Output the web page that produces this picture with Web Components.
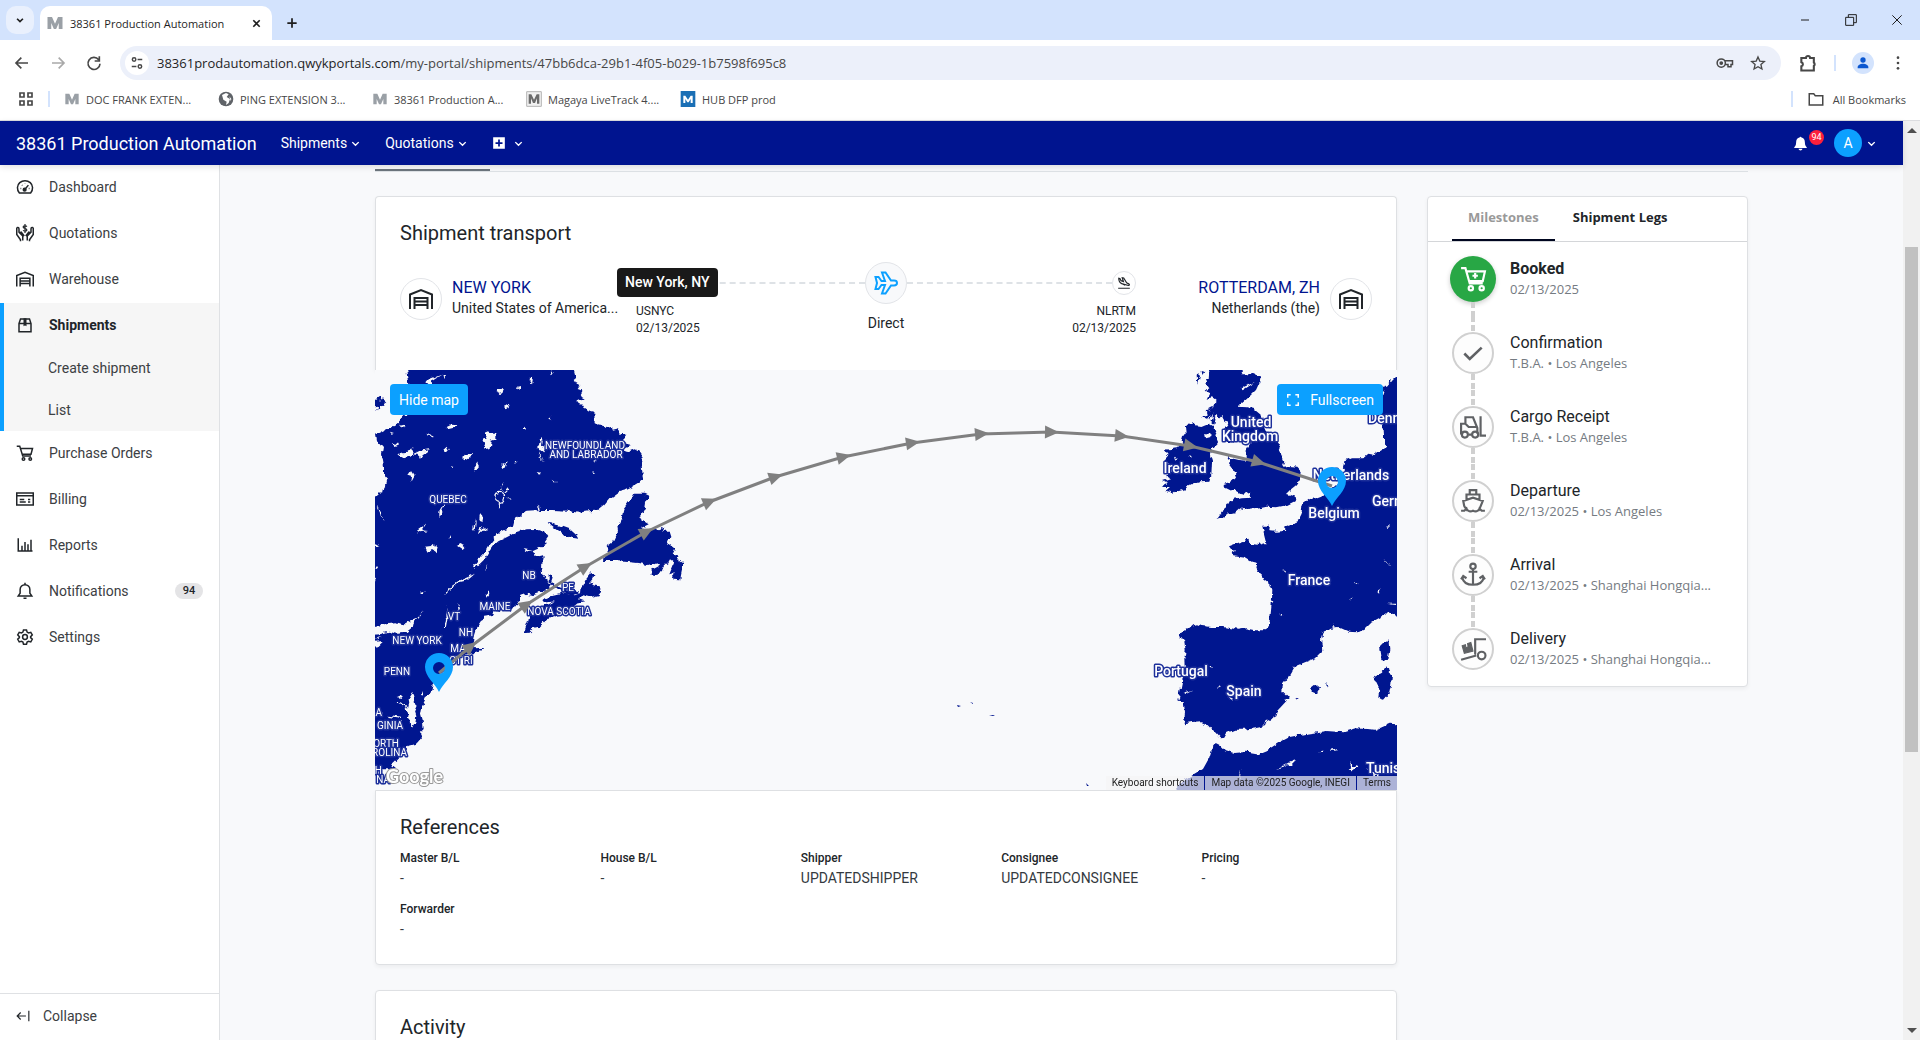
<!DOCTYPE html>
<html lang="en">
<head>
<meta charset="utf-8">
<title>38361 Production Automation</title>
<style>
  html, body { margin: 0; height: 100%; }
  body { font-family: Roboto, "Liberation Sans", sans-serif; font-size: 14px; color: #212529; overflow: hidden; }
</style>
</head>
<body>
<browser-window>
  <tab-strip slot="chrome" label="38361 Production Automation"></tab-strip>
  <address-bar slot="chrome"></address-bar>
  <bookmark-bar slot="chrome">
    <bookmark-link icon="mg">DOC FRANK EXTEN...</bookmark-link>
    <bookmark-link icon="globe">PING EXTENSION 3...</bookmark-link>
    <bookmark-link icon="mg">38361 Production A...</bookmark-link>
    <bookmark-link icon="mbox">Magaya LiveTrack 4....</bookmark-link>
    <bookmark-link icon="mblue">HUB DFP prod</bookmark-link>
  </bookmark-bar>
  <portal-app>
    <portal-header slot="header"></portal-header>
    <side-nav slot="nav">
      <nav-item icon="dash">Dashboard</nav-item>
      <nav-item icon="quote">Quotations</nav-item>
      <nav-item icon="warehouse">Warehouse</nav-item>
      <nav-group>
        <nav-item icon="box" active>Shipments</nav-item>
        <nav-item sub>Create shipment</nav-item>
        <nav-item sub>List</nav-item>
      </nav-group>
      <nav-item icon="cart">Purchase Orders</nav-item>
      <nav-item icon="bill">Billing</nav-item>
      <nav-item icon="chart">Reports</nav-item>
      <nav-item icon="bell" count="94">Notifications</nav-item>
      <nav-item icon="gear">Settings</nav-item>
      <nav-item slot="footer" foot icon="collapse">Collapse</nav-item>
    </side-nav>
    <shipment-view>
      <info-card slot="main" part-top heading="Shipment transport">
        <route-summary></route-summary>
      </info-card>
      <route-map slot="main"></route-map>
      <info-card slot="main" part-bottom heading="References">
        <field-grid>
          <ref-field label="Master B/L">-</ref-field>
          <ref-field label="House B/L">-</ref-field>
          <ref-field label="Shipper">UPDATEDSHIPPER</ref-field>
          <ref-field label="Consignee">UPDATEDCONSIGNEE</ref-field>
          <ref-field label="Pricing">-</ref-field>
          <ref-field label="Forwarder">-</ref-field>
        </field-grid>
      </info-card>
      <info-card slot="main" spaced heading="Activity"></info-card>
      <milestone-card slot="aside">
        <milestone-item done icon="cartplus" label="Booked">02/13/2025</milestone-item>
        <milestone-item icon="check" label="Confirmation">T.B.A. • Los Angeles</milestone-item>
        <milestone-item icon="forklift" label="Cargo Receipt">T.B.A. • Los Angeles</milestone-item>
        <milestone-item icon="ship" label="Departure">02/13/2025 • Los Angeles</milestone-item>
        <milestone-item icon="anchor" label="Arrival">02/13/2025 • Shanghai Hongqia...</milestone-item>
        <milestone-item last icon="dolly" label="Delivery">02/13/2025 • Shanghai Hongqia...</milestone-item>
      </milestone-card>
    </shipment-view>
  </portal-app>
</browser-window>

<script>
const BASE = `*{box-sizing:border-box} button,input{font:inherit;color:inherit;border:0;background:none;padding:0;margin:0} a{color:inherit;text-decoration:none}`;
function define(name, css, html) {
  customElements.define(name, class extends HTMLElement {
    connectedCallback() {
      if (this.shadowRoot) return;
      const root = this.attachShadow({ mode: 'open' });
      const t = document.createElement('template');
      t.innerHTML = `<style>${BASE}${css}</style>` + (typeof html === 'function' ? html(this) : html);
      root.append(t.content.cloneNode(true));
    }
  });
}

const M = (fill) => `<path fill="${fill}" stroke="none" d="M2 20V4h6l4 9 4-9h6v16h-5V12l-3.500 8h-3L7 12v8z"/>`;
const ICONS = {
  down: '<path d="M5 9l7 7 7-7"/>',
  plus: '<path d="M12 4v16M4 12h16"/>',
  close: '<path d="M5 5l14 14M19 5L5 19"/>',
  min: '<path d="M4 12h16"/>',
  restore: '<path d="M4 8h12v12H4zM8 8V4h12v12h-4"/>',
  back: '<path d="M21 12H4M11 4l-8 8 8 8"/>',
  fwd: '<path d="M3 12h17M13 4l8 8-8 8"/>',
  reload: '<path d="M19 7a9 9 0 1 0 2 6M20 2v7h-7"/>',
  tune: '<circle cx="7" cy="6" r="3"/><path d="M13 6h8M3 18h8"/><circle cx="17" cy="18" r="3"/>',
  key: '<circle cx="7" cy="12" r="5.500"/><circle cx="7" cy="12" r="1.500" fill="currentColor"/><path d="M12 9h10v5h-2v3h-4v-3h-4"/>',
  star: '<path d="M12 3l2.700 6.200 6.800.6-5.100 4.500 1.500 6.700-5.900-3.500L6.100 21l1.500-6.700L2.500 9.800l6.800-.6z"/>',
  puzzle: '<path d="M4 6h5.500a2.500 2.500 0 0 1 5 0H19v5.500a2.500 2.500 0 0 1 0 4V21H4v-5a2.600 2.600 0 0 0 0-5z"/>',
  person: '<circle cx="12" cy="7.500" r="4" fill="currentColor" stroke="none"/><path fill="currentColor" stroke="none" d="M4 20v-2c0-3 4-5 8-5s8 2 8 5v2z"/>',
  dots: '<g fill="currentColor" stroke="none"><circle cx="12" cy="4" r="2"/><circle cx="12" cy="12" r="2"/><circle cx="12" cy="20" r="2"/></g>',
  apps: '<path d="M3 3h6v6H3zM15 3h6v6h-6zM3 15h6v6H3zM15 15h6v6h-6z"/>',
  folder: '<path d="M3 5h6l2 2.500h10V20H3z"/>',
  mg: M('#9aa0a6'),
  mbox: '<path fill="#f1f1f1" stroke="#b5b5b5" stroke-width="1.500" d="M1 1h22v22H1z"/>' + '<path fill="#6b6b6b" stroke="none" d="M4 19V5h4l4 8 4-8h4v14h-3.500v-8L13.500 18h-3L7.500 11v8z"/>',
  mblue: '<path fill="#1a6fb5" stroke="none" d="M1 0h22v24H1z"/><path fill="#fff" stroke="none" d="M5 18V7h3l4 6 4-6h3v11h-3v-6l-3 5h-2l-3-5v6z"/>',
  globe: '<circle cx="12" cy="12" r="11" fill="#5f6368" stroke="none"/><path fill="#fff" stroke="none" d="M6 6l6-3 4 2-3 4 5 3-2 6-4 3 1-5-5-3zM17 8l3 4-1 3z"/>',
  dash: '<path d="M4.500 20C.8 15.600 1.200 9.600 5 6.200c4-3.600 10-3.600 14 0 3.800 3.400 4.200 9.400.5 13.800z"/><path d="M12 15l4.500-5.500"/><circle cx="11.500" cy="15.500" r="1.800" fill="currentColor"/><path d="M6 14h1M8 9.500l.5.500M12 7.500v.5M17 14h1"/>',
  quote: '<path d="M1 5v9l5 7v2M1 5c2-1 3 0 3 2v4l5 5v6M4 12l3-1 4 5M23 5v9l-5 7v2M23 5c-2-1-3 0-3 2v4l-5 5v6M20 12l-3-1-4 5"/><path d="M14.500 3.500c-1-1.600-5-1.200-5 .6 0 2.400 5 1.400 5 3.800 0 1.800-4 2-5 .4M12 0v12" stroke-width="1.600"/>',
  warehouse: '<path d="M1 22V7.500L12 3l11 4.500V22M5.500 22V11h13v11M5.500 14.500h13M5.500 18h13"/>',
  box: '<path d="M4 10l2-6h12l2 6v11H4zM4 10h16"/><path fill="currentColor" d="M11 4h2v8l-1-.5-1 .5z"/>',
  cart: '<path d="M1 3h4l4 13h11M5.500 6H22l-2 7.500H8"/><circle cx="10" cy="20" r="1.700"/><circle cx="19" cy="20" r="1.700"/>',
  bill: '<path d="M1 4h22v16H1z"/><path d="M1 7.500h22M5 12.500h6M5 16h8M16 12.500h3M16 16h3"/>',
  chart: '<path d="M3 3v17h19M8 19v-6M12 19V8M16 19v-8M20 19V5"/>',
  bell: '<path d="M3 18.500l2.500-3.500V10a6.500 6.500 0 0 1 13 0v5l2.500 3.500zM10 21.500h4M12 1v2"/>',
  gear: '<circle cx="12" cy="12" r="3.200"/><path d="M10 2.500h4l.8 3 1.900 1.100 3-.8 2 3.400-2.200 2.300v1.300l2.200 2.200-2 3.500-3-.9-1.900 1.100-.8 2.900h-4l-.8-2.900-1.900-1.100-3 .9-2-3.500 2.200-2.200v-1.300L2.300 9.200l2-3.400 3 .8 1.900-1.100z"/>',
  collapse: '<path d="M22 3v18M17 12H2M8 6l-6 6 6 6"/>',
  belldark: '<path fill="currentColor" stroke="none" d="M12 1c1 0 1.500.6 1.500 1.500C17 3.300 19 6 19 10c0 5 1.500 6.500 3 8v1H2v-1c1.500-1.500 3-3 3-8 0-4 2-6.700 5.500-7.500C10.500 1.600 11 1 12 1zM9 20.500h6c0 1.500-1.500 2.500-3 2.500s-3-1-3-2.500z"/>',
  plusbox: '<path fill="currentColor" stroke="none" fill-rule="evenodd" d="M2 2h20v20H2zM10.500 6v4.500H6v3h4.500V18h3v-4.500H18v-3h-4.500V6z"/>',
  plane: '<path d="M1.500 6h3l3 4h3.500L8 1.500h3.500L17 9.600h3c2 0 3 1.400 3 2.400s-1 2.400-3 2.400h-3L11.500 22.500H8L11 14H7.500l-3 4h-3L3 12z"/>',
  landing: '<path d="M2 21h20M3 4l2 .5 2 3.500 4 1.500L9 3l2.500.5 5 8 3.500 2c2 1.200 1.500 3-.5 2.800L8 13c-3-1-5-3.500-5-9zM8 13l6 3"/>',
  full: '<path d="M3 8V3h5M16 3h5v5M21 16v5h-5M8 21H3v-5"/>',
  cartplus: '<path d="M1 2h4l4 14h12M5.500 5H23l-2 9H8.500M14 6.500v5M11.500 9h5"/><circle cx="10" cy="20.500" r="2"/><circle cx="20" cy="20.500" r="2"/>',
  check: '<path d="M4 12.500l5 5L20 7" stroke-width="2.400"/>',
  forklift: '<path d="M3 18H1V9h4V3h7l4 10v5M5 9l3 3h8M8 19h3M19 2v18h5"/><circle cx="4.500" cy="19" r="2.800"/><circle cx="14" cy="19" r="2.800"/>',
  ship: '<path d="M9 6V2h6v3M6 11V6h12v5M4 17l-1-5 9-3 9 3-2 5-2 4M4 17l3 4M1 21h3l2-2c1 3 4 3 6 2 2 1 5 1 6-2l2 2h3"/>',
  anchor: '<circle cx="12" cy="4" r="2.500"/><path d="M12 7v14M8 9h8M2 14c1 5 5 7 10 7s9-2 10-7M1 16l2-3 3 2M23 16l-2-3-3 2"/>',
  dolly: '<path d="M1 22l14-4M24 3H14v14"/><circle cx="20" cy="18" r="3.500"/><path fill="currentColor" d="M2 9l3-1 .5 3 2-1L7 7l3-1 2 8-8 2z" stroke-width="1"/>'
};
define('ui-icon', ':host{display:inline-flex;flex:none;width:var(--s,18px);height:var(--s,18px)} svg{width:100%;height:100%;overflow:visible}',
  (e) => `<svg viewBox="0 0 24 24" fill="none" stroke="currentColor" stroke-width="${e.getAttribute('w') || 2}" aria-hidden="true">${ICONS[e.getAttribute('name')]}</svg>`);

define('browser-window', ':host{display:flex;flex-direction:column;height:100vh;background:#fff} ::slotted(portal-app){flex:1;min-height:0}', '<slot name="chrome"></slot><slot></slot>');

define('tab-strip', `
  :host{display:flex;height:40px;background:#d3e3fd;padding-left:6px;font-family:"Open Sans","Noto Sans",sans-serif;font-size:11px;color:#1f1f1f}
  .list{width:28px;height:28px;margin:6px 6px 0 0;border-radius:10px;background:#e9f0fd;display:flex;align-items:center;justify-content:center}
  .tab{display:flex;align-items:center;width:232px;height:34px;margin-top:6px;background:#fff;border-radius:10px 10px 0 0;padding:0 6px;gap:6px}
  .tab span{flex:1;white-space:nowrap} .x{display:flex;padding:4px}
  .add{margin:6px 0 0 8px;width:24px;display:flex;align-items:center;justify-content:center}
  .win{margin-left:auto;display:flex} .win button{width:46px;display:flex;align-items:center;justify-content:center}
  ui-icon{--s:12px}`,
  (e) => `<button class="list" aria-label="Search tabs"><ui-icon name="down" w="4" style="--s:10px"></ui-icon></button>
  <div class="tab"><ui-icon name="mg" style="--s:18px"></ui-icon><span>${e.getAttribute('label')}</span><button class="x" aria-label="Close tab"><ui-icon name="close" w="3.500" style="--s:11px"></ui-icon></button></div>
  <button class="add" aria-label="New tab"><ui-icon name="plus" w="3" style="--s:14px"></ui-icon></button>
  <div class="win"><button aria-label="Minimize"><ui-icon name="min"></ui-icon></button><button aria-label="Restore"><ui-icon name="restore" style="--s:16px" w="1.500"></ui-icon></button><button aria-label="Close"><ui-icon name="close" style="--s:16px" w="1.500"></ui-icon></button></div>`);

define('address-bar', `
  :host{display:flex;align-items:center;height:46px;padding:0 14px;color:#474747;font-family:"Open Sans","Noto Sans",sans-serif;font-size:13px;background:#fff}
  .nav{display:flex;gap:20px;margin-right:18px} button{display:flex}
  .omni{flex:1;display:flex;align-items:center;height:34px;border-radius:17px;background:#ecf0fa;padding:0 15px 0 5px;gap:16px}
  .tune{width:24px;height:24px;border-radius:12px;background:#fff;align-items:center;justify-content:center;margin-right:-8px}
  .url{flex:1;white-space:nowrap} b{font-weight:400;color:#1f1f1f}
  .right{display:flex;align-items:center;gap:16px;margin-left:17px} i{width:2px;height:16px;background:#d3e3fd}
  .me{width:22px;height:22px;border-radius:11px;background:#d3e3fd;color:#0b57d0;align-items:center;justify-content:center}
  ui-icon{--s:16px}`,
  `<div class="nav"><button aria-label="Back"><ui-icon name="back" w="2.500"></ui-icon></button><button aria-label="Forward" style="color:#a9a9a9"><ui-icon name="fwd" w="2.500"></ui-icon></button><button aria-label="Reload"><ui-icon name="reload" w="2.500"></ui-icon></button></div>
  <div class="omni"><button class="tune" aria-label="Site information"><ui-icon name="tune" w="2.500" style="--s:14px"></ui-icon></button>
  <span class="url"><b>38361prodautomation.qwykportals.com</b>/my-portal/shipments/47bb6dca-29b1-4f05-b029-1b7598f695c8</span>
  <button aria-label="Passwords"><ui-icon name="key" style="--s:18px"></ui-icon></button><button aria-label="Bookmark"><ui-icon name="star"></ui-icon></button></div>
  <div class="right"><button aria-label="Extensions"><ui-icon name="puzzle" style="--s:20px" w="2.500"></ui-icon></button><i></i><button class="me" aria-label="Profile"><ui-icon name="person"></ui-icon></button><button aria-label="Menu"><ui-icon name="dots"></ui-icon></button></div>`);

define('bookmark-bar', `
  :host{display:flex;align-items:center;height:35px;padding:0 14px 8px 18px;border-bottom:1px solid #dcdde0;gap:20px;background:#fff;color:#474747;font-family:"Open Sans","Noto Sans",sans-serif;font-size:11px;box-sizing:border-box}
  i{width:2px;height:16px;background:#d3e3fd;margin:0 -6px 0 -6px} .all{margin-left:auto;display:flex;align-items:center;gap:20px} .all a{display:flex;align-items:center;gap:8px}`,
  `<button aria-label="Apps"><ui-icon name="apps" w="2.500" style="--s:16px;display:flex"></ui-icon></button><i></i><slot></slot><div class="all"><i></i><a href="#"><ui-icon name="folder"></ui-icon>All Bookmarks</a></div>`);
define('bookmark-link', ':host{display:block;width:134px} a{display:flex;align-items:center;gap:6px;white-space:nowrap} ui-icon{--s:16px}',
  (e) => `<a href="#"><ui-icon name="${e.getAttribute('icon')}"></ui-icon><slot></slot></a>`);

define('portal-app', `
  :host{display:grid;grid-template:44px minmax(0,1fr)/220px minmax(0,1fr) 17px;background:#f8f9fb}
  .head{grid-column:1/3;z-index:2;box-shadow:0 2px 6px rgba(0,0,0,.12)} .nav,.main{min-height:0;overflow:hidden}
  .bar{grid-area:1/3/3/4;background:#f1f1f1;display:flex;flex-direction:column;align-items:center}
  .bar span{width:0;border:5px solid transparent;border-top:0;border-bottom-color:#505050;margin:7px 0}
  .bar span:last-child{transform:rotate(180deg);margin-top:auto} .bar b{width:13px;margin-top:107px;height:55%;background:#c1c1c1}`,
  `<div class="head"><slot name="header"></slot></div><div class="bar"><span></span><b></b><span></span></div><div class="nav"><slot name="nav"></slot></div><div class="main"><slot></slot></div>`);

define('portal-header', `
  :host{display:flex;align-items:center;height:44px;background:#00148f;color:#fff;padding:0 26px 0 16px}
  h1{font-size:18px;font-weight:400;margin:0 24px 0 0} nav{display:flex;gap:24px} nav button{display:flex;align-items:center;gap:3px}
  ui-icon{--s:11px} .r{margin-left:auto;display:flex;align-items:center} .bell{display:flex}
  .n{width:15px;height:15px;border-radius:8px;background:#fc1f3c;font-size:9px;line-height:15px;text-align:center;margin:-12px 10px 0 1px}
  .av{width:28px;height:28px;border-radius:14px;background:#0ca0ff;line-height:28px;text-align:center;font-size:14px;margin-right:4px}`,
  `<h1>38361 Production Automation</h1>
  <nav><button>Shipments<ui-icon name="down" w="3"></ui-icon></button><button>Quotations<ui-icon name="down" w="3"></ui-icon></button><button aria-label="Create"><ui-icon name="plusbox" style="--s:14px"></ui-icon><ui-icon name="down" w="3" style="margin-left:4px"></ui-icon></button></nav>
  <div class="r"><button class="bell" aria-label="Notifications"><ui-icon name="belldark" style="--s:15px"></ui-icon></button><span class="n">94</span><button class="av">A</button><ui-icon name="down" w="3"></ui-icon></div>`);

define('side-nav', `:host{display:flex;flex-direction:column;height:100%;background:#fff;border-right:1px solid #dfe1e4;box-sizing:border-box} nav{flex:1} .foot{border-top:1px solid #dfe1e4}`,
  `<nav><slot></slot></nav><div class="foot"><slot name="footer"></slot></div>`);
define('nav-group', ':host{display:block;background:#f6f6f6;box-shadow:inset 4px 0 #0ca0ff}', '<slot></slot>');
define('nav-item', `
  :host{display:block;margin-bottom:2px} :host([active]),:host([sub]){margin:0}
  a{display:flex;align-items:center;gap:15px;height:44px;padding:0 16px;color:#3c4043} :host([sub]) a{height:42px;padding-left:48px} :host([active]) a{font-weight:700;color:#212529}
  ui-icon{color:#212529} :host([foot]) ui-icon{--s:14px} :host([foot]) a{gap:13px}
  em{margin-left:auto;font-style:normal;font-weight:500;font-size:11px;line-height:16px;background:#e4e4e6;border-radius:8px;width:28px;text-align:center;color:#212529}`,
  (e) => `<a href="#">${e.hasAttribute('icon') ? `<ui-icon name="${e.getAttribute('icon')}"></ui-icon>` : ''}<span><slot></slot></span>${e.hasAttribute('count') ? `<em>${e.getAttribute('count')}</em>` : ''}</a>`);

define('shipment-view', `
  :host{display:block;padding:4px 155px 0}
  .tabs{border-bottom:1px solid #dee2e6;margin-bottom:24px} .tabs i{display:block;width:115px;height:2px;background:#6c757d}
  .cols{display:grid;grid-template-columns:minmax(0,1022fr) minmax(0,321fr);gap:30px;align-items:start} .cols>div{display:flex;flex-direction:column}`,
  `<div class="tabs"><i></i></div><div class="cols"><div><slot name="main"></slot></div><div><slot name="aside"></slot></div></div>`);

define('info-card', `
  :host{display:block;background:#fff;border:1px solid #dee0e3;border-radius:4px;padding:24px 24px 25px;box-shadow:0 2px 4px rgba(0,0,0,.05)}
  :host([part-top]){border-bottom:0;border-radius:4px 4px 0 0;padding-bottom:33px} :host([part-bottom]){border-radius:0 0 4px 4px} :host([spaced]){margin-top:25px;min-height:120px}
  h2{font-size:20px;line-height:24px;font-weight:400;margin:0 0 11px}`,
  (e) => `<h2>${e.getAttribute('heading')}</h2><slot></slot>`);
define('field-grid', ':host{display:grid;grid-template-columns:repeat(5,minmax(0,1fr));gap:13px 30px}', '<slot></slot>');
define('ref-field', ':host{display:block} b{display:block;font-size:12px;line-height:16px;font-weight:500;margin-bottom:2px} div{line-height:20px;color:#343a40}',
  (e) => `<b>${e.getAttribute('label')}</b><div><slot></slot></div>`);

define('route-summary', `
  :host{display:grid;grid-template-columns:236px minmax(0,1fr) 236px;padding-top:6px}
  .place{display:flex;gap:10px;padding:16px 0 0 0;line-height:20px} .place p{margin:0;white-space:nowrap}
  .place a{font-size:16px;color:#00148f;white-space:nowrap} .to{justify-content:flex-end;text-align:right}
  .c{display:flex;align-items:center;justify-content:center;flex:none;width:42px;height:42px;border:1px solid #e2e4e8;border-radius:50%;background:#fff}
  .big{background:#f8f9fb;color:#0ca0ff} .small{width:24px;height:24px}
  .legs{display:grid;grid-template-columns:1fr auto 1fr} .line{display:flex;align-items:center;height:42px;position:relative} .line i{flex:1;border-top:2px dashed #dee2e6}
  .t{font-size:12px;line-height:17px;margin-top:-1px} .mid{text-align:center;line-height:20px} .mid .c{margin-bottom:9px}
  .tip{position:absolute;left:-19px;top:6px;background:#191919;color:#fff;border-radius:4px;padding:0 8px;line-height:29px;font-weight:500;white-space:nowrap}`,
  `<div class="place"><span class="c"><ui-icon name="warehouse" style="--s:24px"></ui-icon></span><div><a href="#">NEW YORK</a><p>United States of America...</p></div></div>
  <div class="legs"><div><div class="line"><span class="c small"></span><i></i><span class="tip" role="tooltip">New York, NY</span></div><div class="t">USNYC<br>02/13/2025</div></div>
  <div class="mid"><span class="c big"><ui-icon name="plane" style="--s:24px"></ui-icon></span>Direct</div>
  <div><div class="line"><i></i><span class="c small"><ui-icon name="landing" style="--s:14px"></ui-icon></span></div><div class="t" style="text-align:right">NLRTM<br>02/13/2025</div></div></div>
  <div class="place to"><div><a href="#">ROTTERDAM, ZH</a><p>Netherlands (the)</p></div><span class="c"><ui-icon name="warehouse" style="--s:24px"></ui-icon></span></div>`);

define('milestone-card', `
  :host{display:block;background:#fff;border:1px solid #dee0e3;border-radius:4px;box-shadow:0 2px 4px rgba(0,0,0,.05)}
  .tabs{display:flex;gap:2px;height:45px;padding-left:24px;border-bottom:1px solid #d4d6d9;font-family:"Open Sans","Noto Sans",sans-serif;font-weight:700;font-size:13px;color:#212529}
  button{padding:0 16px 2px;border-bottom:2px solid transparent} .on{color:#999;border-color:#00061f}`,
  `<div class="tabs" role="tablist"><button class="on" role="tab">Milestones</button><button role="tab">Shipment Legs</button></div><slot></slot>`);
define('milestone-item', `
  :host{display:flex;height:74px;padding:0 16px 0 22px;gap:14px}
  .col{width:46px;display:flex;flex-direction:column;align-items:center;flex:none}
  .col i{flex:1;width:4px;background:repeating-linear-gradient(#d0d0d0 0 6px,transparent 6px 9px)} .hide{visibility:hidden}
  .c{width:42px;height:42px;border:2px solid #d0d0d0;border-radius:50%;background:#fdfdfd;color:#5f6164;display:flex;align-items:center;justify-content:center}
  :host([done]) .c{width:46px;height:46px;border:0;background:#28a745;color:#fff;box-shadow:0 2px 5px rgba(0,0,0,.2)}
  .t{min-width:0;align-self:center} b{display:block;font-size:16px;line-height:20px;font-weight:400} :host([done]) b{font-weight:700}
  p{margin:0;font:13px/20px "Open Sans","Noto Sans",sans-serif;color:#757b82;white-space:nowrap}`,
  (e) => `<div class="col"><i class="${e.hasAttribute('done') ? 'hide' : ''}"></i><span class="c"><ui-icon name="${e.getAttribute('icon')}" style="--s:26px"></ui-icon></span><i class="${e.hasAttribute('last') ? 'hide' : ''}"></i></div>
  <div class="t"><b>${e.getAttribute('label')}</b><p><slot></slot></p></div>`);

/* Route waypoints in map units; an arrow head sits on every inner one. */
const ROUTE = [[64,303],[95,277],[151,235],[210,197],[271,162],[334,132],[400,107],[468,87],[537,73],[606,64],[676,62],[746,66],[815,76],[883,92],[957,116]];
const arrows = ROUTE.slice(1, -1).map(([x, y], i) => {
  const a = ROUTE[i], b = ROUTE[i + 2];
  const deg = Math.round(Math.atan2(b[1] - a[1], b[0] - a[0]) * 180 / Math.PI);
  return `<path transform="translate(${x} ${y}) rotate(${deg})" d="M-6-6.500L8 0-6 6.500z"/>`;
}).join('');
const label = (x, y, s, anchor = 'middle', cls = 's') => `<text class="${cls}" x="${x}" y="${y}" text-anchor="${anchor}">${s}</text>`;
const pin = (x, y) => `<path transform="translate(${x} ${y})" fill="#0ca0ff" fill-rule="evenodd" d="M0 24C-4 15-14 9-14-1a14 14 0 0 1 28 0C14 9 4 15 0 24zM0-6a6 6 0 1 0 0 12 6 6 0 0 0 0-12z"/>`;

define('route-map', `
  :host{display:block;position:relative;background:#f8f9fb} svg.m{display:block;width:100%;height:420px}
  text{font-family:Roboto,sans-serif;font-weight:500;fill:#fff;stroke:#1c2f9b;stroke-width:3px;paint-order:stroke;stroke-linejoin:round}
  .s{font-size:10px;font-weight:400} .l{font-size:14px} text.g{font:700 18px Lato,sans-serif;fill:#fff;stroke:#999;stroke-width:2px}
  button{position:absolute;top:14px;height:31px;border-radius:4px;background:#0ca0ff;color:#fff;padding:0 9px;display:flex;align-items:center;gap:10px}
  .hide{left:15px} .full{right:14px}
  .attr{position:absolute;right:0;bottom:0;display:flex;font-size:10px;line-height:14px;color:#222} .attr a{background:rgba(245,245,245,.7);padding:0 6px;border-right:1px solid #00148f} .attr a:last-child{border:0}`,
  `<svg class="m" viewBox="0 0 1022 420" preserveAspectRatio="xMidYMid slice" role="img" aria-label="Route map">
  <defs><filter id="coast" filterUnits="userSpaceOnUse" x="-20" y="-20" width="1062" height="460"><feTurbulence type="fractalNoise" baseFrequency=".16" numOctaves="2" seed="4" result="n"/><feDisplacementMap in="SourceGraphic" in2="n" scale="6" xChannelSelector="R" yChannelSelector="G"/></filter></defs>
  <g filter="url(#coast)">
  <g transform="translate(-5 -5) scale(.33333)">
   <g fill="#00148f">
    <path d="M105-15H615v30l6 25-10 8 20 12-8 12 16 6-8 14 10 6-22 10 8 10 16 2-4 10 12 8 22 5 1 32 10 4 6-4 14 14 10-6 8 2 4 12 18-4 8 14 20 0-8 12-4 8 22 14-22 8 2 8 10 4 22-8 14 8 10 14-3 28 4 40-12 12-20 12-18 8-22 6-28 20-16 20-20 16-28 2-30 4-34-6-38-2h-42l-38 2-14 6-16 12-10 14-4 16-24 10-18 8-16 18-14 18-10 18-16 18-10 16-12 16 4 4 16-14 16-16 10-18 14-20 16-14 28-14 26-14 28-8 36-1 22 7 10 14-10 14 2 14-18 8-20 9-28-6 6 6 20 4 14 10 18-4 2 10-4 18-4 6 4 24 12 16 2 12 16 6-10 12-20 10-26 8-22-4-18 6-2 16-12 8-8 10-8 12-8-14-8 2-2 12-8-14-8 14-14-4-6 14-12 6-14 2-10 18-14 20-6 20-4 26 10 10 24-2-14 12-28 8-24 6-14-2 6 6-24 10-16 26-26 24-14 18-2 18-16 22-12 26-4 24 6 22 2 24-14 14 6 14-14 16-20 6-22 22-20 20-14 14 16 12H-15V395h30l15-14 6 6 4-18 8-8 4-18-10-12v-28l-6-36 3-18-18-20-3-20 28-14 30-14 25-26 18-10-4-85z"/>
    <path d="M15 105l12-8 4 10 6-10 6 14 6 6-12 8-6-6-4 12-8 6 2-12-8 2z"/>
    <path d="M532 473l34 8 34 12 18 16 7 12-28-4-22-12-18-12zM536 628l12 6-4 12 14 16 24 10 34 4 14 4-24 12-32-12-22-18-20-12 4-10z"/>
    <path d="M475 765l4-20 18-12 28-10 30-14-32 4-6-8 30-12 34-8 30 6 22-6 2-20 12-24 16-20 10 4-2 16-12 16 12-4-4 10 22 4 6 12-10 12-26 6-22-6-10 12 16 6-22 4-34 28-36 14-20 4-10 14-12 12-16 4-14 14-18 2z"/>
    <path d="M822 386l16 8-10 20-2 14-8 16-8 22 14 4 12 8-24 12 22 4 18-4 14 6 6-10 14 4-6 10 20 0 4 12-10 14-6 14 10-4 18 14-8 18 16 0 4 6-4 12 12 8 0 22-6 30-22-2-2-8 12-14-20 6 14-34-12-8-6 10-12 0-6 22-18 12-18-2 6-14 20-10-12-10-20 6-30-6-36-4-32-2-34 0 2-16 12-18-8-10 22-16 14-30-2-14 12-24 6-26 16-22 14-26z"/>
   </g>
   <g fill="#f8f9fb">
    <path d="M-10 788l25-3 35-10 26-3 28 6 12-10 14-4 28-26-26 32-4 18-16 14-30 4-26-6-26 8-40 2zM-10 832l51-4-16 16-35 4zM15 824l20-8-14 2z"/>
    <path d="M85 270l8-8 24-2 14-16-4 16-4 14-22 6zM128 268l20-10 32-6-22 16-8 12-4-10zM230 186l14-7 22 2-14 8-16 4zM340 205l14-6 8 6 14 2 0 22-10-6-4 26-14 4-12-22 4-8 10-2-8-14zM276 276l14-10 14 2-6 10-12 8zM222 250l8-8 6 12-8 6zM500 250l10-10 4-22 4 8-2 16 12 4-8 16-12-4zM115 330l8-12 8 12-10 18 2-16zM395 290l6 8 12-6-6 16-12 4zM440 65l14-2-6 12zM170 50l14-16 8 4 24-10-28 18-4 10 10 6-24-6zM478 44l12-8-4 20zM536 154l8 10-8-2zM403 122l10-6 4 10-12 4zM380 76l22-8-4 18-10 4zM310 305l8-10 6 12-8 16zM205 440l12-20 12-8-14 22-2 14-8 4zM260 540l12-6 14 10-8 8zM165 548l18-2 6-12 2 14 10-4-4 18-10-8-14 10zM140 498l20-14 10-10-14 22 22 2-24 4zM324 500l10-14 4 10 14-6-8 10zM330 444l8 10-4 20-6-10zM318 460l-8 30 4 8zM500 420l8 4 2 16zM500 318l12 2-2 10zM460 190l6-6 2 14zM675 290l12-8-8 2zM664 318l12 6-8 2zM548 344l10 8-6 0zM235 520l5-10v10zM15 538l12 4-12 6zM20 600l-4 14 8-6zM14 630l4 12-4 16zM17 1150l14 4-14 6zM18 420l10 16 16 30-16-20zM150 680l14-2-8 10zM350 686l6-12 2 16-6 8zM18 1040l18 8 2-4zM80 988l14 8-4 4zM154 975l-4 16 8 4zM220 30l4 12 4-8z" />
    <path d="M130 980l4 20-4 14 10 8-8 18 4 14-4 22-8 12-2-20-12-14 10 0-4-12-12-10 10-2 4-16-2-12zM315 626l-26 12-24 10-22 16-20 26 6-4 22-22 16-12 26-6zM230 724l4 26-2 14-4 24-4 0 4-24-2-14zM262 714l8 16-4 8zM445 718l14-8-2 16zM508 262l2 12 14 14-4-2-14-14zM350 600l-8 18 4-4zM60 200l12 4-8 2zM62 235l24 2-12 6zM84 180l16-4 8 12-10-4zM440 285l-4 8 6-2zM240 296l4 10 6-2z"/>
   </g>
   <g fill="none" stroke="#f8f9fb" stroke-width="3.500"><circle cx="389" cy="397" r="15"/><path d="M400 383l12-12M392 378l4-22M388 412v18M398 292l8 14M84 1015l34 16M52 1054l44 6M290 270l16-6M172 205l18 8M540 20l4 10M424 402h-8"/></g>
  </g>
  <g transform="translate(725 -5) scale(.33333)">
   <g fill="#00148f">
    <path d="M330-15H425v30l2 10 30 0 25 10-4 18-10 22-18 18-20 18-16 14 26 2 22 6 22 18 8 28 12 28 16 20 20 10-6 14 10 18 9 22-6 14 18-2 24 2 13 14-2 22-12 20-18 14-12 12 30 8-4 14-24 12-30 6-30-2-28 6-26 4-22-8-20 18-20 4-16 8-18 4 16-22 20-16 12-22 28-4 28-2-6-12-18 6-20-12-16 2-24-12-2-10 26-8 14-14-10-26-14-18 4-12 26 6 26 2v-34l12-20-10-10-18 6-24 4-22-4-6-34 16-22-8-6-6 6-6-20-10 10-6-14-8 6-4 24-6-4 6-30-12 22 4-22-8 18-14-6 14-6-4-14 12 2 6-12 12-20-14-10-16 4 8-16-14-8 14-10-10-14 8-8zM290 32l10-4-4 12-4 16zM305 18l8 2-6 10zM318 42l10 0 8 10-14 0zM326 128l12-6-4 14-10 2z"/>
    <path d="M258 180l16-8 16 12 14 2 24-10 12 8 12 18-6 12 8 16-18 18-6 22 6 20-2 40-6 20-28 2-20 6-24 12-22 6-18 14-8-10-12-2 14-12-22 0 16-10-18-8 24-8-12-8 32-18-36-8 16-8-20-10 16-18-12-16 36-4 20-12-8-10 4-14 14-4z"/>
    <path d="M930-10V10L891 30l-16 16-14 16-14 2 6 12-8 24-6 40 8 36 2 30 0 32 12 8-20 12-14 2-2 10-20-4-16 14-30 0-26 10-4 16 14 20-20 10-14 20-20 18-22 18-20 8-20 2-20 14-2 30-8 16-20 14-20 8-2 14-28 2-22-2 2-16-20 0 4 20 8 32-22 6-26-4-6-12-14 4-18 6-26 10 6 8 16 2-14 8 8 12 32 4 20 12 16 4-2 14 12 16 10 18 20 16 6 16-2 40-4 40-4 28-10 14-30 0-28-6-26 4-42-8-40 0-28-4-12-4-16 4-10 10-20 10-4 14 12 14 4 24-4 30 2 34-8 30-6 30-6 28 16 8 4 30-4 34 22-4 30-2 22 10 14 16 20 22 14-2 8-14 22-10 32 0 30-4 30-6 6-16 28-14 6-20 24-26 4-14-16-16 2-20 16-20 20-34 30-12 34-14 18-18-4-38 6-20 20-14 26-2 32 14 28 2 20-10 22-22 30-16 18-12 22 8 19 15h40z"/>
    <path d="M205 1300l20-25 20-25 34-20 30-18 18-32 10-32 10-14 12 6 16 16 26 8 40-4 34 6 26-10 34-22 34-18 50-10 60-8 52 4 38-12 60 4 40-18 22 2h30v220zM865 822l3 30-4 24-9 16-14-20-4-26 12-12 10 0zM858 900l18 30-3 32-5 24-16 18-20-6 4-36-14-28 24-14zM626 972l18-14 16 12-10 16-14-6zM674 954l16 6-4 4zM585 1003l8-6-2 6z"/>
   </g>
   <g fill="#f8f9fb"><path d="M316 210l10-6 6 12-14 4zM222 275l6 4-2 10zM268 270l4 10-6-4zM850 585l20 12 2 6zM762 655l18-2-14 6zM834 680l8-10-2 16zM748 704l10-8-6 10zM860 716h31v4zM504 690l16 20-4 4zM548 615l16 12-14-6zM534 746l16 2-6 4zM858 485l12-2-6 6zM700 778l4 8-4 6zM690 1154l20-4 4 6-22 2zM658 1164l12-8-2 8zM528 1212l40-20 14-6-6 12-16 0-12 8zM750 1192l10 8 12 4-16 12-10-2 8-8zM800 1210l24 18 10-6-2 12-12-2zM250 984l30-10-26 14zM350 964l12 2-2 4zM325 900l10 10-2-10zM380 990l20 12-6 2zM424 1210l-4 30-2-4zM422 70l46-20-40 26zM850 64l8-4-2 6zM410 200l18 8-8 16z"/></g>
  </g>
  </g>
  <path fill="#00148f" d="M582 335l4 1-3 1zM595 332l3 1v1zM614 345h6l-2 1zM711 413l3 3h-2z"/>
  <g>${label(210,79,'NEWFOUNDLAND')}${label(211,88,'AND LABRADOR')}${label(73,133,'QUEBEC')}${label(154,209,'NB')}${label(193,221,'PE')}${label(184,245,'NOVA SCOTIA')}${label(120,240,'MAINE')}${label(79,250,'VT')}${label(91,266,'NH')}${label(42,274,'NEW YORK')}${label(83,282,'MA')}${label(86,294,'CT RI')}${label(22,305,'PENN')}${label(7,346,'A','end')}${label(28,359,'GINIA','end')}${label(24,377,'ORTH','end')}${label(32,386,'ROLINA','end')}${label(7,404,'H','end')}${label(15,413,'NA','end')}
  ${label(876,57,'United','middle','l')}${label(875,71,'Kingdom','middle','l')}${label(810,103,'Ireland','middle','l')}${label(976,110,'Netherlands','middle','l')}${label(959,148,'Belgium','middle','l')}${label(993,53,'Denmark','start','l')}${label(997,136,'Germany','start','l')}${label(934,215,'France','middle','l')}${label(806,306,'Portugal','middle','l')}${label(869,326,'Spain','middle','l')}${label(991,403,'Tunisia','start','l')}</g>
  <text class="g" x="11" y="413">Google</text>
  <polyline points="${ROUTE.join(' ')}" fill="none" stroke="#808080" stroke-width="3"/>
  <g fill="#808080">${arrows}</g>
  ${pin(64,298)}${pin(957,112)}
  </svg>
  <button class="hide">Hide map</button>
  <button class="full"><ui-icon name="full" w="2.500" style="--s:14px"></ui-icon>Fullscreen</button>
  <div class="attr"><a href="#">Keyboard shortcuts</a><a href="#">Map data ©2025 Google, INEGI</a><a href="#">Terms</a></div>`);
</script>
</body>
</html>
